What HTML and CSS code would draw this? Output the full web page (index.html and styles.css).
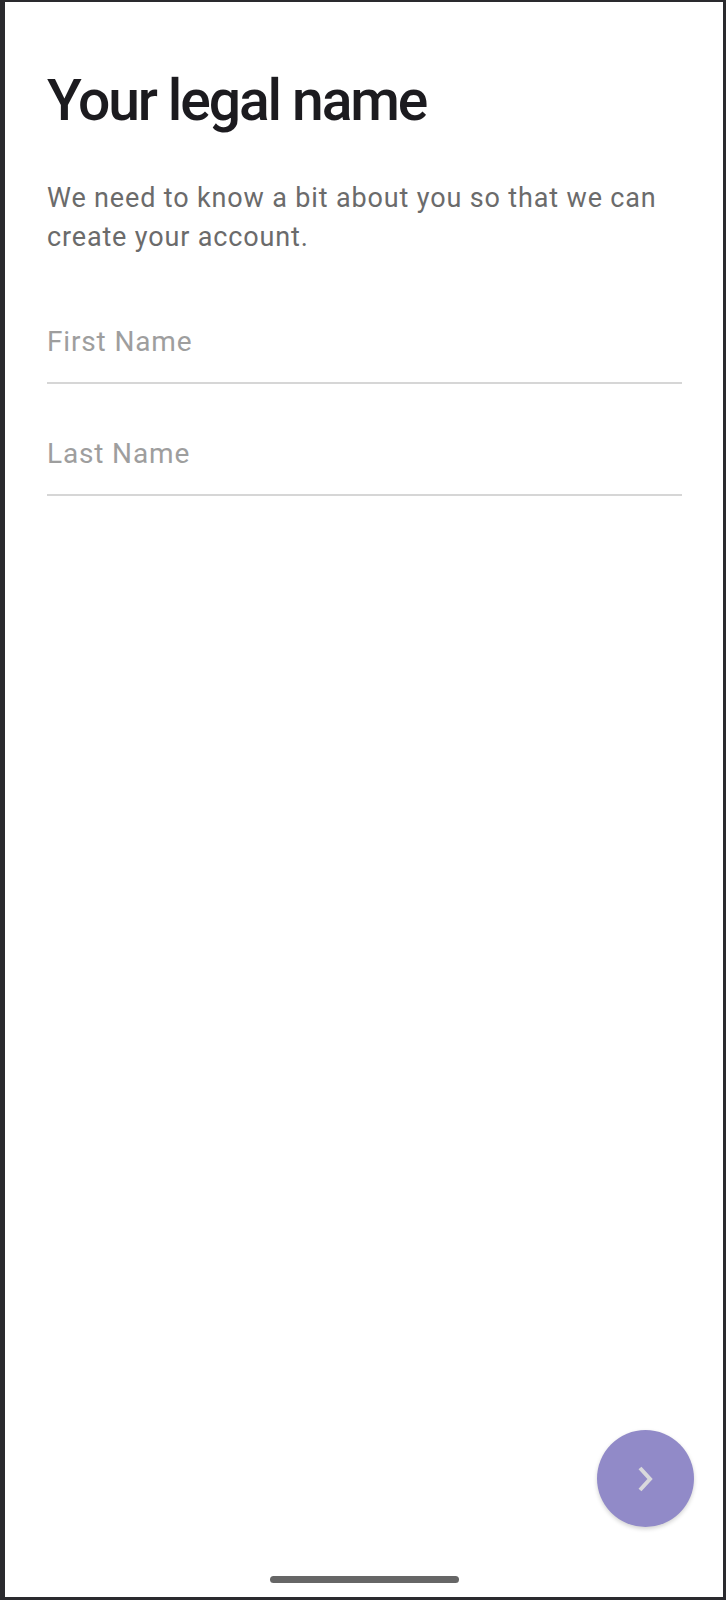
FILE: index.html
```html
<!DOCTYPE html>
<html lang="en">
<head>
<meta charset="utf-8">
<title>Your legal name</title>
<link rel="stylesheet" href="styles.css">
</head>
<body>
<div class="frame">
  <main class="screen">
    <h1 class="title">Your legal name</h1>
    <p class="lead">We need to know a bit about you so that we can create your account.</p>
    <div class="field"><span class="placeholder">First Name</span></div>
    <div class="field"><span class="placeholder">Last Name</span></div>
    <div class="spacer"></div>
    <div class="home-bar"></div>
    <button class="fab" aria-label="Next">
      <svg width="24" height="30" viewBox="0 0 24 30"><path d="M6 4 L16 15 L6 26" fill="none" stroke="#d9d9dc" stroke-width="4"/></svg>
    </button>
  </main>
</div>
</body>
</html>
```
FILE: styles.css
```css
html, body {
  margin: 0;
  padding: 0;
  background: #2a2a2e;
}
.frame {
  width: 726px;
  height: 1600px;
  box-sizing: border-box;
  padding: 2px 3px 3px 5px;
  display: flex;
}
.screen {
  position: relative;
  flex: 1;
  background: #ffffff;
  display: flex;
  flex-direction: column;
  padding: 0 41px 0 42px;
  font-family: Roboto, "Noto Sans", sans-serif;
}
.title {
  margin: 67px 0 0 0;
  font-size: 57px;
  line-height: 64px;
  font-weight: 500;
  color: #1c1b1f;
  letter-spacing: -2.1px;
}
.lead {
  margin: 46px 0 0 0;
  font-size: 27px;
  line-height: 39px;
  color: #6b6b6b;
  letter-spacing: 0.85px;
}
.field {
  margin-top: 65px;
  padding-bottom: 21px;
  border-bottom: 2px solid #d6d6d6;
}
.field + .field {
  margin-top: 50px;
}
.placeholder {
  display: block;
  font-size: 28px;
  line-height: 39px;
  color: #9e9e9e;
  letter-spacing: 0.85px;
}
.spacer {
  flex: 1;
}
.home-bar {
  align-self: center;
  width: 189px;
  height: 7px;
  border-radius: 4px;
  background: #666666;
  margin: 0 0 14px -1px;
}
.fab {
  position: absolute;
  left: 592px;
  top: 1428px;
  width: 97px;
  height: 97px;
  border: none;
  border-radius: 50%;
  background: #918ac8;
  box-shadow: 0 2px 4px rgba(0,0,0,0.18);
  display: flex;
  align-items: center;
  justify-content: center;
  padding: 0;
}
```
